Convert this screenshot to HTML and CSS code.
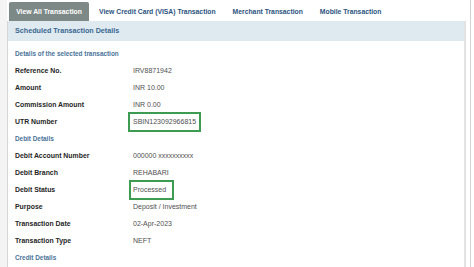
FILE: index.html
```html
<!DOCTYPE html>
<html>
<head>
<meta charset="utf-8">
<link rel="stylesheet" href="styles.css">
</head>
<body>
<div class="outer">
  <div class="tabs">
    <div class="tab active">View All Transaction</div>
    <div class="tab">View Credit Card (VISA) Transaction</div>
    <div class="tab">Merchant Transaction</div>
    <div class="tab">Mobile Transaction</div>
  </div>
  <div class="panel">
    <div class="panel-head">Scheduled Transaction Details</div>
    <div class="panel-body">
      <div class="section">Details of the selected transaction</div>
      <div class="row"><span class="label">Reference No.</span><span class="value">IRV8871942</span></div>
      <div class="row"><span class="label">Amount</span><span class="value">INR 10.00</span></div>
      <div class="row"><span class="label">Commission Amount</span><span class="value">INR 0.00</span></div>
      <div class="row"><span class="label">UTR Number</span><span class="value"><span class="hl hl-utr">SBIN123092966815</span></span></div>
      <div class="section">Debit Details</div>
      <div class="row"><span class="label">Debit Account Number</span><span class="value">000000 xxxxxxxxxx</span></div>
      <div class="row"><span class="label">Debit Branch</span><span class="value">REHABARI</span></div>
      <div class="row"><span class="label">Debit Status</span><span class="value"><span class="hl hl-status">Processed</span></span></div>
      <div class="row"><span class="label">Purpose</span><span class="value">Deposit / Investment</span></div>
      <div class="row"><span class="label">Transaction Date</span><span class="value">02-Apr-2023</span></div>
      <div class="row"><span class="label">Transaction Type</span><span class="value">NEFT</span></div>
      <div class="section">Credit Details</div>
    </div>
  </div>
</div>
</body>
</html>
```
FILE: styles.css
```css
html, body {
  margin: 0;
  padding: 0;
  background: #ffffff;
}
body {
  font-family: "Liberation Sans", Arial, sans-serif;
  width: 474px;
  height: 267px;
  overflow: hidden;
}
.outer {
  width: 470px;
  height: 267px;
  border-right: 1px solid #d2d2d2;
  background: linear-gradient(to right, #f4f4f4 0, #f4f4f4 7px, #ffffff 7px);
  overflow: hidden;
}
.tabs {
  display: flex;
  gap: 3px;
  padding: 2px 0 0 9px;
  height: 19px;
}
.tab {
  height: 19px;
  line-height: 19px;
  padding: 0 7px;
  font-size: 6.8px;
  font-weight: bold;
  color: #2c5480;
  white-space: nowrap;
}
.tab.active {
  background: #7d8987;
  color: #ffffff;
  border-radius: 2px 2px 0 0;
  width: 66px;
  text-align: center;
}
.panel {
  margin-left: 7px;
  width: 459px;
  box-sizing: border-box;
  border-left: 1px solid #d6d6d6;
  border-right: 2px solid #e3e3e3;
  height: 246px;
  background: #ffffff;
}
.panel-head {
  height: 20px;
  line-height: 20px;
  background: #deeaf0;
  padding-left: 7px;
  font-size: 7.2px;
  font-weight: bold;
  color: #3b6790;
}
.panel-body {
  padding: 4px 0 0 7px;
}
.section {
  height: 17px;
  line-height: 17px;
  font-size: 6.4px;
  font-weight: bold;
  color: #4a7399;
}
.row {
  display: grid;
  grid-template-columns: 118px 1fr;
  align-items: center;
  height: 17px;
}
.label {
  font-size: 6.9px;
  font-weight: bold;
  color: #262626;
  white-space: nowrap;
}
.value {
  font-size: 7px;
  color: #505050;
  white-space: nowrap;
  display: flex;
  align-items: center;
}
.hl {
  display: inline-block;
  border: 2px solid #3d9b52;
  height: 16px;
  line-height: 16px;
  margin: -2px 0;
}
.hl-utr {
  margin-left: -5px;
  padding: 0 3px;
}
.hl-status {
  margin-left: -4px;
  padding: 0 6px 0 2px;
}
```
